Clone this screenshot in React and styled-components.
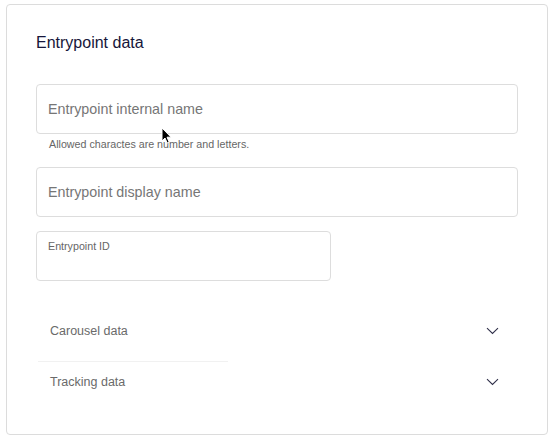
import React from "react";
import styled, { createGlobalStyle } from "styled-components";

const Global = createGlobalStyle`
  body {
    margin: 0;
    background: #ffffff;
    font-family: "Liberation Sans", Arial, sans-serif;
  }
`;

const Page = styled.div`
  position: relative;
  width: 554px;
  height: 440px;
  padding: 4px 6px;
  box-sizing: border-box;
`;

const Card = styled.section`
  width: 542px;
  height: 431px;
  box-sizing: border-box;
  border: 1px solid #dcdcdc;
  border-radius: 4px;
  padding: 28px 29px 0 29px;
  display: flex;
  flex-direction: column;
`;

const Title = styled.h2`
  margin: 0;
  font-size: 16px;
  line-height: 19px;
  font-weight: 400;
  color: #16163a;
`;

const Field = styled.div`
  width: ${(p) => p.width}px;
  height: 50px;
  box-sizing: border-box;
  border: 1px solid #dddddd;
  border-radius: 4px;
  margin-top: ${(p) => p.top}px;
  padding: ${(p) => (p.labelled ? "8px 11px 0" : "0 11px")};
  display: flex;
  flex-direction: column;
  justify-content: ${(p) => (p.labelled ? "flex-start" : "center")};
`;

const Placeholder = styled.span`
  font-size: 14.3px;
  color: #767676;
`;

const SmallLabel = styled.span`
  font-size: 10.7px;
  line-height: 13px;
  color: #666666;
`;

const Helper = styled.p`
  margin: 4px 0 0 13px;
  font-size: 10.7px;
  line-height: 12px;
  color: #666666;
`;

const Accordion = styled.div`
  width: 482px;
  margin-top: 30px;
  display: flex;
  flex-direction: column;
`;

const Header = styled.div`
  height: 40px;
  padding: 0 19px 0 14px;
  display: flex;
  align-items: center;
  justify-content: space-between;
  font-size: 12.5px;
  color: #6a6a6a;
`;

const Divider = styled.div`
  width: 190px;
  margin: 10px 0 0 2px;
  height: 1px;
  background: #f1f1f1;
`;

const Cursor = styled.svg`
  position: absolute;
  left: 161px;
  top: 127px;
`;

const Chevron = () => (
  <svg width="13" height="8" viewBox="0 0 13 8" fill="none">
    <path d="M1 1.2l5.5 5.3L12 1.2" stroke="#30304a" strokeWidth="1.1" />
  </svg>
);

const Item = ({ label }) => (
  <Header>
    <span>{label}</span>
    <Chevron />
  </Header>
);

export default function App() {
  return (
    <>
      <Global />
      <Page>
        <Card>
          <Title>Entrypoint data</Title>
          <Field width={482} top={32}>
            <Placeholder>Entrypoint internal name</Placeholder>
          </Field>
          <Helper>Allowed charactes are number and letters.</Helper>
          <Field width={482} top={17}>
            <Placeholder>Entrypoint display name</Placeholder>
          </Field>
          <Field width={295} top={14} labelled>
            <SmallLabel>Entrypoint ID</SmallLabel>
          </Field>
          <Accordion>
            <Item label="Carousel data" />
            <Divider />
            <Item label="Tracking data" />
          </Accordion>
        </Card>
        <Cursor width="12" height="18" viewBox="0 0 12 18">
          <path
            d="M1 1v13l3-3 2.2 5 2-0.9-2.2-4.9H10z"
            fill="#000"
            stroke="#fff"
            strokeWidth="1"
          />
        </Cursor>
      </Page>
    </>
  );
}
